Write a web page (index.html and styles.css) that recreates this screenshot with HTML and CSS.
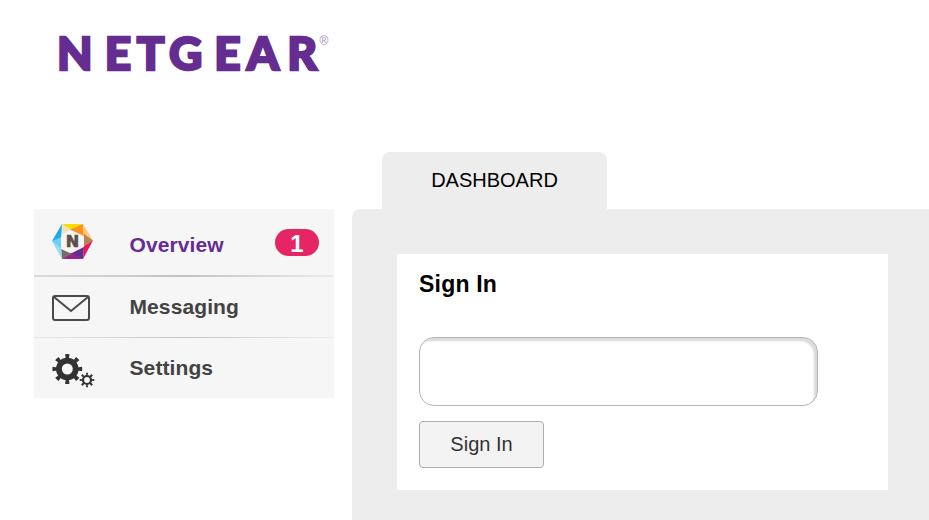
FILE: index.html
```html
<!DOCTYPE html>
<html lang="en">
<head>
  <meta charset="utf-8">
  <title>NETGEAR</title>
  <link rel="stylesheet" href="styles.css">
</head>
<body>
  <header class="header">
    <svg class="logo" width="290" height="70" viewBox="0 0 290 70">
      <text class="logo-text" x="0 47.7 79.7 111.9 157.2 189.7 230.2" y="50">NETGEAR</text>
      <text class="logo-mark" x="262.5" y="25">®</text>
    </svg>
  </header>

  <div class="page">
    <nav class="sidebar">
      <a class="nav-item nav-overview active">
        <svg class="nav-icon" width="46" height="42" viewBox="0 0 46 42">
          <polygon fill="#f8f4f0" points="2,20 12,3 33,3 43,19.5 33,38 12,38"/>
          <polygon fill="#efe3c4" points="12,3 22,8 11,14"/>
          <polygon fill="#ffdc00" points="12,3 33,3 21,8.5"/>
          <polygon fill="#f7941e" points="33,3 34,15 20,8.5"/>
          <polygon fill="#fcc77c" points="33,3 43,19.5 34,14"/>
          <polygon fill="#b5835a" points="43,19.5 34,13 34,25"/>
          <polygon fill="#ed1556" points="43,19.5 33,38 34,25"/>
          <polygon fill="#662d91" points="33,38 34,26 20,33"/>
          <polygon fill="#92278f" points="33,38 12,38 21,32"/>
          <polygon fill="#7b6b68" points="12,38 11,28 22,33"/>
          <polygon fill="#8fdcf8" points="2,20 12,38 11,25"/>
          <polygon fill="#1fa9e6" points="2,20 12,3 11,18"/>
          <polygon fill="#6fcdf3" points="2,20 11,16 11,27"/>
          <text class="hex-letter" x="22.5" y="26.2">N</text>
        </svg>
        <span class="nav-label">Overview</span>
        <span class="badge">1</span>
      </a>
      <a class="nav-item nav-messaging">
        <svg class="nav-icon" width="46" height="42" viewBox="0 0 46 42">
          <rect x="3" y="10" width="36" height="24" rx="2"/>
          <path d="M4 11l17 14 17-14"/>
        </svg>
        <span class="nav-label">Messaging</span>
      </a>
      <a class="nav-item nav-settings">
        <svg class="nav-icon" width="46" height="42" viewBox="0 0 46 42">
          <circle class="gear" cx="17.3" cy="22" r="8.4" stroke-width="5.8"/>
          <circle class="gear" cx="17.3" cy="22" r="12.6" stroke-width="4.6" pathLength="16" stroke-dasharray="0.8 1.2" stroke-dashoffset="0.4"/>
          <circle class="gear" cx="37" cy="33" r="4" stroke-width="2.2"/>
          <circle class="gear" cx="37" cy="33" r="5.9" stroke-width="2.8" pathLength="16" stroke-dasharray="0.8 1.2" stroke-dashoffset="0.4"/>
        </svg>
        <span class="nav-label">Settings</span>
      </a>
    </nav>

    <main class="main">
      <div class="tab">DASHBOARD</div>
      <div class="panel">
        <form class="card">
          <h1 class="card-title">Sign In</h1>
          <input class="field" type="password" aria-label="Password">
          <button class="button" type="button">Sign In</button>
        </form>
      </div>
    </main>
  </div>
</body>
</html>
```
FILE: styles.css
```css
body {
  margin: 0;
  height: 520px;
  overflow: hidden;
  background-color: #fff;
  font-family: "Liberation Sans", Arial, sans-serif;
}

.header {
  height: 152px;
  box-sizing: border-box;
  padding: 20px 0 0 57px;
}

.logo {
  display: block;
}

.logo-text {
  font-family: Lato, sans-serif;
  font-size: 46px;
  font-weight: 900;
  fill: #662d91;
  stroke: #662d91;
  stroke-width: 2.4px;
}

.logo-mark {
  font-size: 12px;
  fill: #a58abf;
}

.page {
  display: flex;
  gap: 18px;
  height: 368px;
  padding-left: 34px;
}

.sidebar {
  width: 300px;
  height: 189px;
  margin-top: 57px;
  background-color: #f6f6f6;
}

.nav-item {
  display: flex;
  align-items: center;
  box-sizing: border-box;
  padding: 0 15px 0 16px;
  color: #434343;
  font-size: 21px;
  font-weight: bold;
  letter-spacing: 0.1px;
}

.nav-overview {
  height: 68px;
  border-bottom: 2px solid;
  border-image: linear-gradient(to right, #dcdcdc, #c2c2c2 50%, #ececec) 1;
}

.nav-messaging {
  height: 61px;
  border-bottom: 1px solid;
  border-image: linear-gradient(to right, #e8e8e8, #c4c4c4 50%, #ececec) 1;
}

.nav-settings {
  height: 60px;
}

.active {
  color: #662d91;
}

.nav-icon {
  margin-right: 33.5px;
  fill: none;
  stroke: none;
}

.nav-messaging .nav-icon {
  stroke: #4a4a4a;
  stroke-width: 2;
}

.gear {
  stroke: #333;
}

.hex-letter {
  font-family: "DejaVu Sans", sans-serif;
  font-size: 16px;
  font-weight: bold;
  letter-spacing: 0;
  text-anchor: middle;
  fill: #5b504e;
  stroke: #5b504e;
  stroke-width: 0.7px;
}

.nav-label {
  flex: 1;
}

.nav-overview .nav-label {
  padding-top: 6px;
}

.badge {
  width: 44px;
  height: 27px;
  border-radius: 14px;
  background-color: #e62565;
  color: #fff;
  font-size: 24px;
  line-height: 29px;
  text-align: center;
  letter-spacing: 0;
}

.main {
  flex: 1;
}

.tab {
  width: 225px;
  height: 57px;
  margin-left: 30px;
  border-radius: 8px 8px 0 0;
  background-color: #ededed;
  color: #000;
  font-size: 20px;
  line-height: 56px;
  text-align: center;
}

.panel {
  height: 311px;
  box-sizing: border-box;
  padding: 45px 41px 0 45px;
  border-top-left-radius: 8px;
  background-color: #ededed;
}

.card {
  height: 236px;
  box-sizing: border-box;
  padding: 17px 22px 0;
  background-color: #fff;
}

.card-title {
  margin: 0 0 40px;
  font-size: 23px;
  line-height: 26px;
  letter-spacing: 0.2px;
}

.field {
  display: block;
  box-sizing: border-box;
  width: 399px;
  height: 69px;
  margin-bottom: 15px;
  border: 1px solid #b4b4b4;
  border-radius: 15px;
  background-color: #fff;
  box-shadow: inset -3px 3px 2px #dadada;
}

.button {
  display: block;
  width: 125px;
  height: 47px;
  padding: 0;
  border: 1px solid #adadad;
  border-radius: 4px;
  background-color: #f3f3f3;
  color: #333;
  font-family: inherit;
  font-size: 20px;
}
```
